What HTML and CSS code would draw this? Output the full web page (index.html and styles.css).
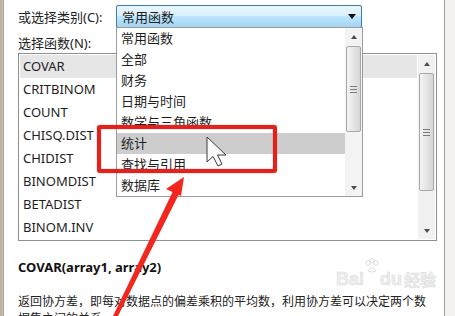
FILE: index.html
```html
<!DOCTYPE html>
<html>
<head>
<meta charset="utf-8">
<title>插入函数</title>
<link rel="stylesheet" href="styles.css">
</head>
<body>
<div class="frame">
<div class="dialog">

  <div class="row">
    <span class="label catLabel">或选择类别(C):</span>
    <div class="combo">
      <span>常用函数</span>
      <span class="tri down dark"></span>
    </div>
  </div>

  <div class="label fnLabel">选择函数(N):</div>

  <div class="listbox">
    <div class="items">
      <div class="item sel">COVAR</div>
      <div class="item">CRITBINOM</div>
      <div class="item">COUNT</div>
      <div class="item">CHISQ.DIST</div>
      <div class="item">CHIDIST</div>
      <div class="item">BINOMDIST</div>
      <div class="item">BETADIST</div>
      <div class="item">BINOM.INV</div>
    </div>
    <div class="sb">
      <div class="sbBtn"><span class="tri up"></span></div>
      <div class="thumb bigThumb"><span class="grip"></span></div>
      <div class="sbFill"></div>
      <div class="sbBtn"><span class="tri down"></span></div>
    </div>
  </div>

  <div class="sig">COVAR(array1, array2)</div>
  <div class="desc">返回协方差，即每对数据点的偏差乘积的平均数，利用协方差可以决定两个数<br>据集之间的关系。</div>

</div>
</div>

<!-- opened category list -->
<div class="dropdown">
  <div class="items">
    <div class="ditem">常用函数</div>
    <div class="ditem">全部</div>
    <div class="ditem">财务</div>
    <div class="ditem">日期与时间</div>
    <div class="ditem">数学与三角函数</div>
    <div class="ditem hot">统计</div>
    <div class="ditem">查找与引用</div>
    <div class="ditem">数据库</div>
  </div>
  <div class="sb">
    <div class="sbBtn"><span class="tri up"></span></div>
    <div class="thumb smallThumb"><span class="grip"></span></div>
    <div class="sbFill"></div>
    <div class="sbBtn"><span class="tri down"></span></div>
  </div>
</div>

<div class="watermark">Bai<svg class="paw" width="16" height="16" viewBox="0 0 16 16"><ellipse cx="4" cy="5" rx="2" ry="2.6" fill="none" stroke="#dcdcdc"/><ellipse cx="8" cy="2.8" rx="1.8" ry="2.2" fill="none" stroke="#dcdcdc"/><ellipse cx="12" cy="5" rx="2" ry="2.6" fill="none" stroke="#dcdcdc"/><path d="M4 13 Q8 6 12 13 Q8 15 4 13 Z" fill="none" stroke="#dcdcdc"/></svg>du<span class="wmCn">经验</span></div>

<div class="redBox"></div>

<svg class="overlay" width="455" height="316" viewBox="0 0 455 316">
  <polygon points="184,177 166,189 181,196" fill="#f1261e"/>
  <polygon points="174,189 180,192 118,316 113,316" fill="#f1261e"/>
  <path d="M207 137 L207 162 L213 156.5 L218 166 L222 164 L217.5 155 L226 155 Z" fill="#fbfbfb" stroke="#3a3a3a" stroke-width="1" stroke-linejoin="round"/>
</svg>
</body>
</html>
```

FILE: styles.css
```css
html, body {
  margin: 0;
  padding: 0;
}
body {
  width: 455px;
  height: 316px;
  overflow: hidden;
  position: relative;
  background: linear-gradient(to right, #bcab92 0, #cfc2ae 3px, #f4f2ee 3px);
  font-family: "Noto Sans", "Noto Sans CJK SC", sans-serif;
  font-size: 13px;
  color: #1e1e1e;
}

.frame {
  margin-left: 3px;
  width: 442px;
  height: 316px;
  border-left: 1px solid #a3a3a3;
  border-right: 1px solid #a0a0a0;
  box-sizing: border-box;
  background: #fff;
}
.dialog {
  padding: 5px 0 0 14px;
}

.row {
  display: flex;
  align-items: center;
  height: 23px;
}
.label {
  line-height: 16px;
  color: #222;
}
.catLabel {
  width: 98px;
}
.combo {
  width: 246px;
  height: 23px;
  box-sizing: border-box;
  border: 1px solid #3d7bad;
  border-radius: 2px;
  background: linear-gradient(to bottom, #eaf6fd 0%, #d9f0fc 45%, #bee6fd 50%, #a2d4f2 100%);
  display: flex;
  align-items: center;
  justify-content: space-between;
  padding: 0 5px 0 5px;
  line-height: 16px;
}

.fnLabel {
  margin-top: 7px;
}

.listbox {
  margin-top: 2px;
  width: 419px;
  height: 188px;
  box-sizing: border-box;
  border: 1px solid #8f9090;
  padding: 1px;
  display: flex;
}
.listbox .items {
  flex: 1;
  margin-right: 1px;
}
.item {
  height: 23px;
  line-height: 23px;
  padding-left: 3px;
}
.item.sel {
  background: #e6e6e6;
}

.sb {
  width: 17px;
  display: flex;
  flex-direction: column;
  background: #f1f1f1;
}
.sbBtn {
  height: 17px;
  display: flex;
  align-items: center;
  justify-content: center;
}
.sbFill {
  flex: 1;
}
.thumb {
  margin: 0 1px;
  border: 1px solid #a9a9a9;
  border-radius: 2px;
  background: linear-gradient(to right, #f4f4f4 0%, #e6e6e6 50%, #d6d6d6 100%);
  display: flex;
  align-items: center;
  justify-content: center;
}
.bigThumb {
  height: 116px;
  margin-top: 1px;
}
.smallThumb {
  height: 84px;
  margin-top: 1px;
}
.grip {
  width: 7px;
  height: 5px;
  border-top: 1px solid #7c7c7c;
  border-bottom: 1px solid #7c7c7c;
  position: relative;
}
.grip::after {
  content: "";
  position: absolute;
  left: 0;
  right: 0;
  top: 2px;
  border-top: 1px solid #7c7c7c;
}

.tri {
  width: 0;
  height: 0;
  border-left: 3.5px solid transparent;
  border-right: 3.5px solid transparent;
}
.tri.up {
  border-bottom: 4px solid #4d4d4d;
}
.tri.down {
  border-top: 4px solid #4d4d4d;
}
.tri.dark {
  border-left-width: 4px;
  border-right-width: 4px;
  border-top: 5px solid #111;
}

.sig {
  margin-top: 17px;
  line-height: 18px;
  font-weight: bold;
  color: #111;
}
.desc {
  margin-top: 17px;
  white-space: nowrap;
  font-size: 12px;
  line-height: 17px;
  color: #222;
}

.dropdown {
  position: absolute;
  left: 116px;
  top: 27px;
  width: 247px;
  height: 170px;
  box-sizing: border-box;
  border: 1px solid #9c9c9c;
  background: #fff;
  display: flex;
}
.dropdown .items {
  flex: 1;
}
.dropdown .sb {
  background: #f3f3f3;
}
.ditem {
  height: 21px;
  line-height: 21px;
  padding-left: 4px;
}
.ditem.hot {
  background: #cdcdcd;
}

.redBox {
  position: absolute;
  left: 97px;
  top: 125px;
  width: 180px;
  height: 48px;
  box-sizing: border-box;
  border: 4px solid #e3211d;
  border-radius: 3px;
  box-shadow: 0 0 1px #b01010, inset 0 0 1px #b01010;
}

.overlay {
  position: absolute;
  left: 0;
  top: 0;
}

.watermark {
  position: absolute;
  left: 336px;
  top: 270px;
  height: 18px;
  line-height: 18px;
  font-family: "Liberation Sans", sans-serif;
  font-size: 18px;
  font-weight: bold;
  color: #eeeeee;
  -webkit-text-stroke: 0.6px #dedede;
  display: flex;
  align-items: flex-end;
}
.paw {
  margin-bottom: 14px;
}
.wmCn {
  font-family: "Noto Sans CJK SC", sans-serif;
  font-size: 16px;
  line-height: 18px;
  margin-left: 2px;
}
```
